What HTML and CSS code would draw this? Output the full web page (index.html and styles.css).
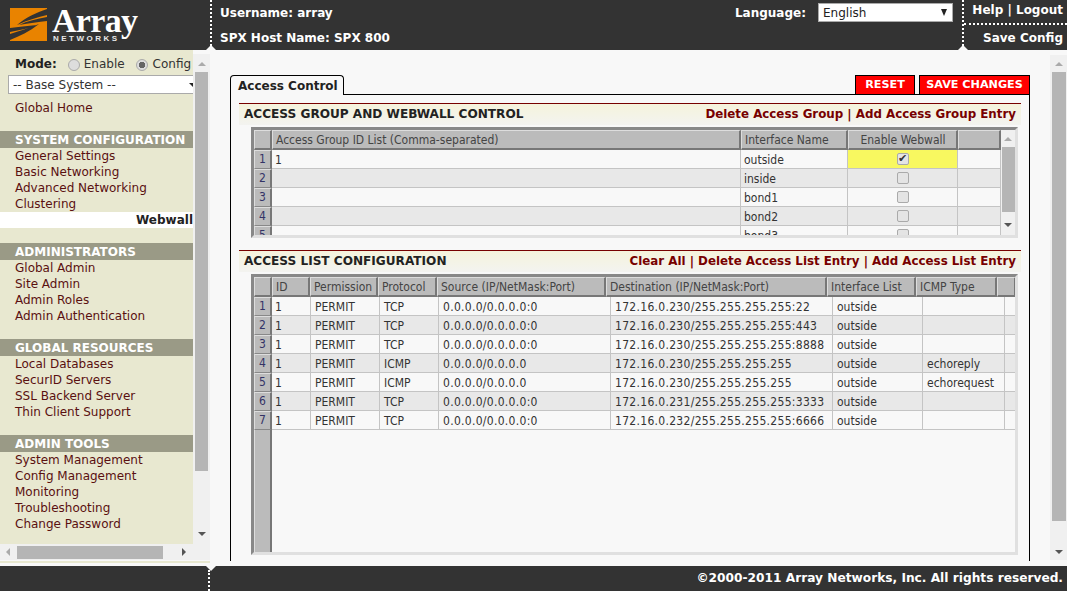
FILE: index.html
```html
<!DOCTYPE html>
<html lang="en">
<head>
<meta charset="utf-8">
<title>Array Networks - Access Control</title>
<link rel="stylesheet" href="styles.css">
</head>
<body>
<div class="page">
  <header class="top">
    <div class="logo-cell">
      <svg class="logo-mark" width="38" height="34" viewBox="0 0 38 34">
        <rect x="0" y="0" width="37" height="33" fill="#e98300"/>
        <path d="M37 1 C26 5 16 9 7 17 C18 12 28 9 37 7Z M37 9 C27 11 17 13 9 17 C19 15 29 14 37 13Z M0 32 C10 28 20 23 29 16 C19 20 9 23 0 26Z M0 24 C10 22 20 20 27 17 C17 18 8 19 0 20Z" fill="#333"/>
      </svg>
      <div class="logo-words">
        <span class="logo-array">Array</span>
        <span class="logo-net">NETWORKS</span>
      </div>
    </div>
    <div class="user-cell">
      <div>Username: array</div>
      <div>SPX Host Name: SPX 800</div>
    </div>
    <div class="lang-cell">
      <span>Language:</span>
      <div class="lang-select"><span>English</span><i class="arrow-d"></i></div>
    </div>
    <div class="action-cell">
      <div class="action-top">Help | Logout</div>
      <div class="action-bottom">Save Config</div>
    </div>
  </header>

  <div class="middle">
    <aside class="side">
      <div class="side-main">
        <div class="side-pane">
          <div class="mode-row">
            <b>Mode:</b>
            <span class="radio"></span><span class="mode-label">Enable</span>
            <span class="radio on"></span><span>Config</span>
          </div>
          <div class="base-select"><span>-- Base System --</span><i class="arrow-d"></i></div>
          <a class="nav home">Global Home</a>
          <h3 class="sec">SYSTEM CONFIGURATION</h3>
          <a class="nav">General Settings</a>
          <a class="nav">Basic Networking</a>
          <a class="nav">Advanced Networking</a>
          <a class="nav">Clustering</a>
          <a class="nav current">Webwall</a>
          <h3 class="sec">ADMINISTRATORS</h3>
          <a class="nav">Global Admin</a>
          <a class="nav">Site Admin</a>
          <a class="nav">Admin Roles</a>
          <a class="nav">Admin Authentication</a>
          <h3 class="sec">GLOBAL RESOURCES</h3>
          <a class="nav">Local Databases</a>
          <a class="nav">SecurID Servers</a>
          <a class="nav">SSL Backend Server</a>
          <a class="nav">Thin Client Support</a>
          <h3 class="sec">ADMIN TOOLS</h3>
          <a class="nav">System Management</a>
          <a class="nav">Config Management</a>
          <a class="nav">Monitoring</a>
          <a class="nav">Troubleshooting</a>
          <a class="nav">Change Password</a>
        </div>
        <div class="vbar side-vbar"><i class="arrow-u"></i><div class="thumb"></div><i class="arrow-d"></i></div>
      </div>
      <div class="hbar"><i class="arrow-l"></i><div class="hthumb"></div><i class="arrow-r"></i></div>
      <div class="side-foot"></div>
    </aside>

    <main class="content">
      <div class="work">
        <div class="tabs">
          <div class="tab">Access Control</div>
          <div class="buttons">
            <div class="btn reset">RESET</div>
            <div class="btn save">SAVE CHANGES</div>
          </div>
        </div>
        <div class="box">
          <div class="sec-bar">
            <span class="sec-title">ACCESS GROUP AND WEBWALL CONTROL</span>
            <span class="sec-links">Delete Access Group | Add Access Group Entry</span>
          </div>
          <div class="grid grid-one">
            <div class="grid-table">
              <div class="g1 head">
                <div class="hc"></div><div class="hc">Access Group ID List (Comma-separated)</div><div class="hc">Interface Name</div><div class="hc ctr">Enable Webwall</div><div class="hc"></div>
              </div>
              <div class="g1 row"><div class="num">1</div><div class="c">1</div><div class="c">outside</div><div class="c chk yellow"><span class="box-check on">✔</span></div><div class="c"></div></div>
              <div class="g1 row alt"><div class="num">2</div><div class="c"></div><div class="c">inside</div><div class="c chk"><span class="box-check"></span></div><div class="c"></div></div>
              <div class="g1 row"><div class="num">3</div><div class="c"></div><div class="c">bond1</div><div class="c chk"><span class="box-check"></span></div><div class="c"></div></div>
              <div class="g1 row alt"><div class="num">4</div><div class="c"></div><div class="c">bond2</div><div class="c chk"><span class="box-check"></span></div><div class="c"></div></div>
              <div class="g1 row"><div class="num">5</div><div class="c"></div><div class="c">bond3</div><div class="c chk"><span class="box-check"></span></div><div class="c"></div></div>
            </div>
            <div class="vbar grid-vbar"><i class="arrow-u"></i><div class="thumb"></div><i class="arrow-d"></i></div>
          </div>
          <div class="sec-bar second">
            <span class="sec-title">ACCESS LIST CONFIGURATION</span>
            <span class="sec-links">Clear All | Delete Access List Entry | Add Access List Entry</span>
          </div>
          <div class="grid grid-two">
            <div class="g2h head">
              <div class="hc"></div><div class="hc">ID</div><div class="hc">Permission</div><div class="hc">Protocol</div><div class="hc">Source (IP/NetMask:Port)</div><div class="hc">Destination (IP/NetMask:Port)</div><div class="hc">Interface List</div><div class="hc">ICMP Type</div><div class="hc"></div>
            </div>
            <div class="g2-body">
              <div class="g2 row"><div class="num">1</div><div class="c">1</div><div class="c pad">PERMIT</div><div class="c pad">TCP</div><div class="c pad ip">0.0.0.0/0.0.0.0:0</div><div class="c pad ip">172.16.0.230/255.255.255.255:22</div><div class="c pad">outside</div><div class="c pad"></div><div class="c"></div></div>
              <div class="g2 row alt"><div class="num">2</div><div class="c">1</div><div class="c pad">PERMIT</div><div class="c pad">TCP</div><div class="c pad ip">0.0.0.0/0.0.0.0:0</div><div class="c pad ip">172.16.0.230/255.255.255.255:443</div><div class="c pad">outside</div><div class="c pad"></div><div class="c"></div></div>
              <div class="g2 row"><div class="num">3</div><div class="c">1</div><div class="c pad">PERMIT</div><div class="c pad">TCP</div><div class="c pad ip">0.0.0.0/0.0.0.0:0</div><div class="c pad ip">172.16.0.230/255.255.255.255:8888</div><div class="c pad">outside</div><div class="c pad"></div><div class="c"></div></div>
              <div class="g2 row alt"><div class="num">4</div><div class="c">1</div><div class="c pad">PERMIT</div><div class="c pad">ICMP</div><div class="c pad ip">0.0.0.0/0.0.0.0</div><div class="c pad ip">172.16.0.230/255.255.255.255</div><div class="c pad">outside</div><div class="c pad">echoreply</div><div class="c"></div></div>
              <div class="g2 row"><div class="num">5</div><div class="c">1</div><div class="c pad">PERMIT</div><div class="c pad">ICMP</div><div class="c pad ip">0.0.0.0/0.0.0.0</div><div class="c pad ip">172.16.0.230/255.255.255.255</div><div class="c pad">outside</div><div class="c pad">echorequest</div><div class="c"></div></div>
              <div class="g2 row alt"><div class="num">6</div><div class="c">1</div><div class="c pad">PERMIT</div><div class="c pad">TCP</div><div class="c pad ip">0.0.0.0/0.0.0.0:0</div><div class="c pad ip">172.16.0.231/255.255.255.255:3333</div><div class="c pad">outside</div><div class="c pad"></div><div class="c"></div></div>
              <div class="g2 row"><div class="num">7</div><div class="c">1</div><div class="c pad">PERMIT</div><div class="c pad">TCP</div><div class="c pad ip">0.0.0.0/0.0.0.0:0</div><div class="c pad ip">172.16.0.232/255.255.255.255:6666</div><div class="c pad">outside</div><div class="c pad"></div><div class="c"></div></div>
              <div class="num-fill"></div>
            </div>
          </div>
        </div>
      </div>
      <div class="vbar main-vbar"><i class="arrow-u"></i><div class="thumb"></div><i class="arrow-d"></i></div>
    </main>
  </div>

  <footer class="bottom">
    <div class="foot-left"></div>
    <div class="foot-right">©2000-2011 Array Networks, Inc. All rights reserved.</div>
  </footer>
</div>
</body>
</html>
```
FILE: styles.css
```css
* { box-sizing: border-box; }
html, body { margin: 0; padding: 0; height: 100%; overflow: hidden; }
body { font: 12px/16px "DejaVu Sans", Verdana, sans-serif; color: #222; background: #f8f8f8; }
.page { display: grid; grid-template-rows: 50px 516px 25px; width: 1067px; height: 591px; overflow: hidden; }
.middle { display: grid; grid-template-columns: 210px 857px; min-height: 0; overflow: hidden; }

/* header */
.top { display: grid; grid-template-columns: 210px 1fr auto 105px; background: #333; color: #fff; font-weight: bold; font-size: 12px; }
.logo-cell { display: flex; padding: 7px 0 0 10px; gap: 4px; }
.logo-mark { margin-top: 1px; }
.logo-words { display: flex; flex-direction: column; width: 90px; }
.logo-array { font: bold 34px/27px "Liberation Serif", serif; color: #fff; letter-spacing: -.7px; height: 27px; }
.logo-net { font: bold 8px/9px "Liberation Sans", sans-serif; letter-spacing: 2.5px; color: #e8e8e8; margin-left: 1px; }
.user-cell { border-left: 2px dotted #fff; padding: 5px 0 0 8px; position: relative; display: flex; flex-direction: column; gap: 9px; }
.user-cell::after { content: ""; position: absolute; left: -6px; bottom: 0; border: 5px solid transparent; border-bottom-color: #f8f8f8; border-top: 0; }
.lang-cell { display: flex; align-items: flex-start; gap: 12px; padding: 5px 9px 0 0; }
.lang-select { width: 135px; height: 19px; margin-top: -2px; background: #fff; border: 1px solid #aaa; color: #222; font-weight: normal; font-size: 12px; display: flex; justify-content: space-between; align-items: center; padding: 0 5px 0 4px; }
.lang-select .arrow-d { border: 3.5px solid transparent; border-bottom: 0; border-top: 7px solid #222; }
.action-cell { border-left: 2px dotted #fff; display: flex; flex-direction: column; position: relative; }
.action-cell::after { content: ""; position: absolute; left: -6px; bottom: 0; border: 5px solid transparent; border-bottom-color: #f8f8f8; border-top: 0; }
.action-top { height: 25px; border-bottom: 2px dotted #fff; text-align: right; padding: 2px 4px 0 0; }
.action-bottom { text-align: right; padding: 5px 4px 0 0; }

/* arrows */
.arrow-d, .arrow-u, .arrow-l, .arrow-r { display: block; width: 0; height: 0; border: 4px solid transparent; flex: none; }
.arrow-d { border-top-color: #555; border-bottom: 0; }
.arrow-u { border-bottom-color: #aaa; border-top: 0; }
.arrow-l { border-right-color: #aaa; border-left: 0; }
.arrow-r { border-left-color: #555; border-right: 0; }

/* scrollbars */
.vbar { background: #f0f0f0; display: flex; flex-direction: column; align-items: center; }
.thumb { background: #b5b5b5; flex: none; }

/* sidebar */
.side { display: grid; grid-template-rows: 494px 16px 6px; width: 210px; background: #f8f8f8; min-height: 0; }
.side-main { display: grid; grid-template-columns: 193px 17px; min-height: 0; }
.side-pane { background: #e8e8d0; overflow: hidden; color: #600; padding-top: 1px; }
.side-vbar { margin-top: 4px; padding-top: 8px; }
.side-vbar .thumb { width: 13px; height: 399px; margin: 6px 0 61px; }
.mode-row { display: flex; align-items: center; white-space: nowrap; padding: 4px 0 0 15px; height: 21px; color: #333; }
.mode-row b { margin-right: 11px; color: #222; font-size: 12px; }
.mode-label { margin-right: 11px; margin-left: -1px; }
.radio { width: 12px; height: 12px; border-radius: 50%; border: 1px solid #aaa; background: #ddd; margin: 3px 5px 0 0; flex: none; }
.radio.on { background: radial-gradient(circle, #666 0 3px, #ddd 3.5px); }
.base-select { width: 190px; height: 19px; margin: 3px 0 0 8px; background: #fff; border: 1px solid #aaa; color: #333; display: flex; justify-content: space-between; align-items: center; padding: 0 0 0 4px; }
.base-select .arrow-d { border-top-color: #222; }
.nav { display: block; height: 16px; padding-left: 15px; white-space: nowrap; color: #5a1010; }
.nav.home { margin-top: 6px; }
.nav.current { background: #fff; font-weight: bold; color: #222; text-align: right; }
.sec { margin: 15px 0 0; height: 17px; padding-left: 15px; background: #9a9a86; color: #fff; font-size: 12px; line-height: 19px; font-weight: bold; white-space: nowrap; overflow: hidden; }
.hbar { background: #f0f0f0; display: flex; align-items: center; padding-left: 6px; }
.hthumb { width: 146px; height: 13px; margin: 0 19px 0 7px; background: #b5b5b5; }
.side-foot { background: linear-gradient(#f8f8f8 0 1px, #e8e8d0 1px 3px, #f8f8f8 3px); }

/* content */
.content { display: grid; grid-template-columns: 840px 17px; background: #f8f8f8; min-height: 0; }
.work { padding: 25px 20px 0 20px; display: flex; flex-direction: column; height: 511px; }
.main-vbar { margin-top: 5px; height: 505px; padding-top: 7px; }
.main-vbar .thumb { width: 14px; height: 449px; margin: 6px 0 29px; }
.tabs { display: flex; justify-content: space-between; height: 20px; margin-bottom: -1px; position: relative; }
.tab { width: 114px; height: 20px; background: #f8f8f8; border: 1px solid #000; border-bottom: 0; border-radius: 4px 4px 0 0; padding: 2px 0 0 7px; font-weight: bold; font-size: 12px; color: #222; }
.buttons { display: flex; gap: 4px; }
.btn { height: 19px; background: #f00; border: 1px solid #000; border-bottom: 0; color: #fff; font-weight: bold; font-size: 11.2px; text-align: center; line-height: 18px; white-space: nowrap; }
.btn.reset { width: 60px; }
.btn.save { width: 111px; }
.box { flex: 1; border: 1px solid #000; border-bottom: 0; background: #f8f8f8; padding: 8px 8px 0 8px; min-height: 0; overflow: hidden; }
.sec-bar { height: 22px; border-top: 1px solid #700; background: linear-gradient(#f5f3dc, #f3f3f0); display: flex; justify-content: space-between; align-items: center; padding: 0 5px 2px; font-weight: bold; font-size: 12px; white-space: nowrap; }
.sec-bar.second { margin-top: 12px; }
.sec-title { color: #222; font-size: 12.1px; }
.sec-links { color: #700; font-size: 11.85px; }

/* grids */
.grid { margin: 2px 3px 0 12px; background: #f8f8f8; border: 3px solid #e0e0e0; border-left-color: #888; border-top-color: #888; overflow: hidden; font-family: "DejaVu Sans Condensed", "DejaVu Sans", sans-serif; }
.grid-one { height: 111px; display: grid; grid-template-columns: 747px 1fr; }
.grid-two { height: 281px; position: relative; display: flex; flex-direction: column; }
.grid-table { overflow: hidden; min-width: 0; }
.grid-vbar { padding-top: 7px; }
.grid-vbar .thumb { width: 13px; height: 65px; margin: 6px 0 11px; }
.head .hc { background: #bbb; border-top: 1px solid #ddd; border-left: 1px solid #ddd; border-right: 2px solid #777; border-bottom: 2px solid #777; height: 20px; padding: 0 2px 0 3px; white-space: nowrap; overflow: hidden; color: #444; line-height: 18px; }
.ctr { text-align: center; }
.g1 { display: grid; grid-template-columns: 18px 469px 107px 110px 43px; }
.g2h { display: grid; grid-template-columns: 18px 38px 68px 59px 169px 221px 89px 81px 19px; flex: none; }
.g2 { display: grid; grid-template-columns: 18px 39px 69px 59px 172px 222px 90px 82px 12px; }
.row { height: 19px; background: #f8f8f8; }
.row.alt { background: #e8e8e8; }
.c { border-right: 1px solid #c4c4c4; border-bottom: 1px solid #c4c4c4; padding: 2px 0 0 3px; white-space: nowrap; overflow: hidden; color: #333; line-height: 17px; }
.c.pad { padding-left: 4px; }
.ip { letter-spacing: .3px; }
.num { background: #bbb; border-top: 1px solid #ddd; border-left: 1px solid #ddd; border-right: 2px solid #777; border-bottom: 1px solid #888; text-align: center; color: #336; line-height: 17px; }
.chk { display: flex; align-items: center; justify-content: center; padding: 0; }
.yellow { background: #f8f860; }
.box-check { width: 12px; height: 12px; border: 1px solid #aaa; border-radius: 2px; background: #e4e4e4; font: 11px/10px "DejaVu Sans", sans-serif; text-align: center; color: #333; display: block; }
.g2-body { flex: 1; display: flex; flex-direction: column; min-height: 0; }
.num-fill { flex: 1; width: 18px; background: #bbb; border-left: 1px solid #ddd; border-right: 2px solid #777; }

/* footer */
.bottom { display: grid; grid-template-columns: 210px 1fr; background: #333; color: #fff; font-weight: bold; font-size: 12.2px; }
.foot-left { position: relative; }
.foot-left::before { content: ""; position: absolute; right: -6px; top: 0; border: 5px solid transparent; border-top-color: #f8f8f8; border-bottom: 0; }
.foot-left::after { content: ""; position: absolute; right: -2px; top: 4px; bottom: 0; width: 2px; border-left: 2px dotted #fff; }
.foot-right { text-align: right; padding: 4px 4px 0 0; white-space: nowrap; }
```
